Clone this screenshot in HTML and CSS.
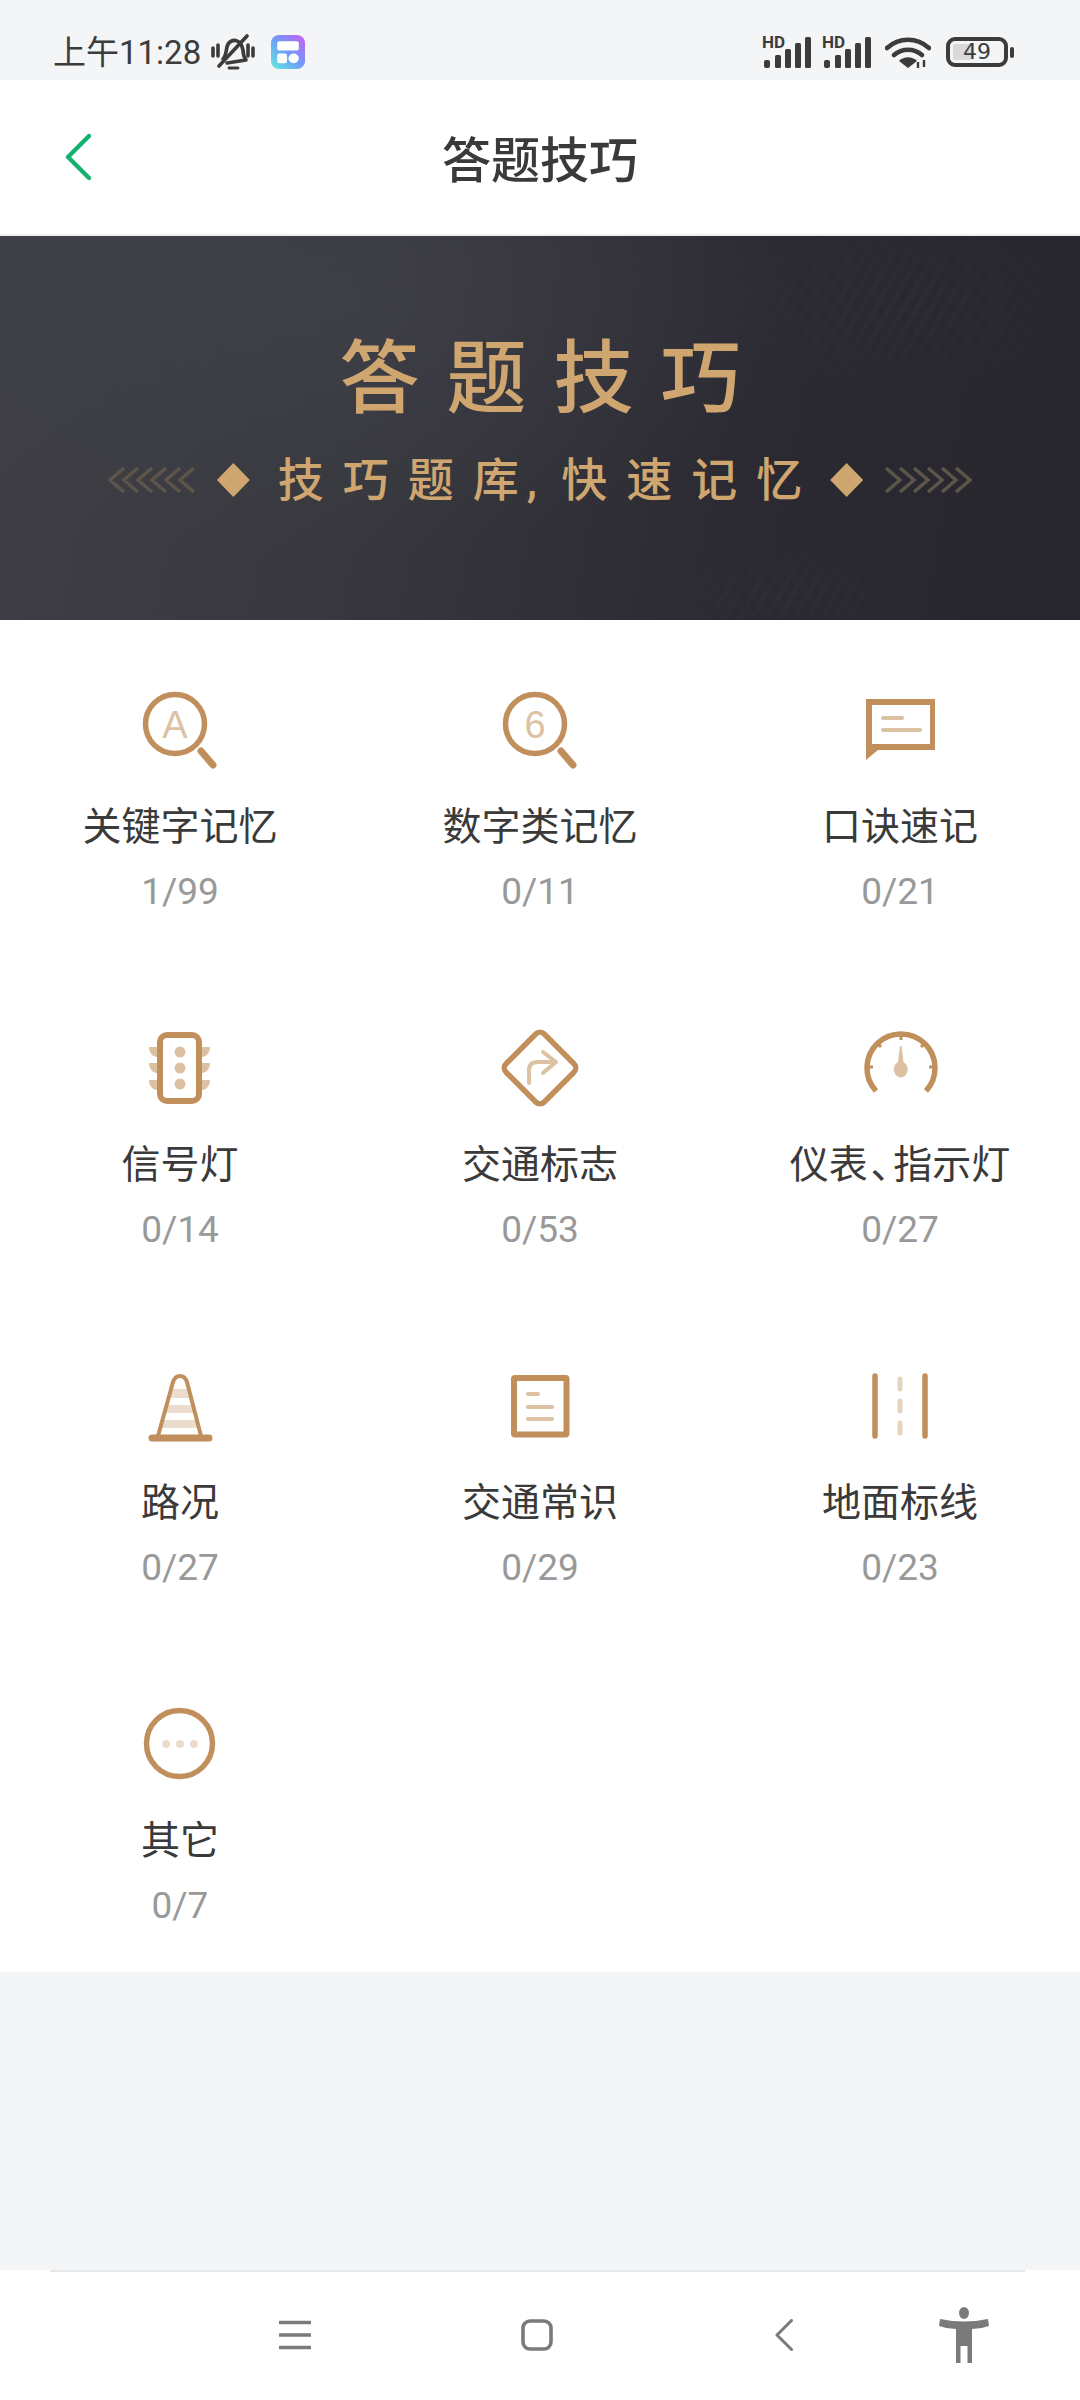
FILE: index.html
```html
<!DOCTYPE html>
<html lang="zh-CN">
<head>
  <meta charset="UTF-8">
  <title>答题技巧</title>
  <link rel="stylesheet" href="styles.css">
</head>
<body>
  <div class="status-bar">
    <div class="status-left">
      <span class="time">上午11:28</span>
      <svg class="bell" width="44" height="36" viewBox="0 0 44 36">
        <g fill="none" stroke="#3c3c3c" stroke-width="3.6" stroke-linecap="round" stroke-linejoin="round">
          <path d="M2 14v8M7 11v11M37 11v11M42 14v8"/>
          <path d="M12 25c3-3 3-8 4-12 1-5 6-8 10-6 4 1 5 5 6 9 0 4 1 7 3 10l-19 3"/>
          <path d="M8 32 36 2"/>
          <path d="M18 34h9" stroke-width="2.8"/>
        </g>
      </svg>
      <svg class="app-badge" width="34" height="34" viewBox="0 0 33 35" preserveAspectRatio="none">
        <defs>
          <linearGradient id="badge" x1="0" y1="1" x2="1" y2="0">
            <stop offset="0" stop-color="#62ecdf"/>
            <stop offset="0.5" stop-color="#6f9bf8"/>
            <stop offset="1" stop-color="#c95ff5"/>
          </linearGradient>
        </defs>
        <rect width="33" height="35" rx="8" fill="url(#badge)"/>
        <rect x="6" y="6.5" width="21" height="9.5" rx="2" fill="#fff"/>
        <rect x="6" y="19" width="9.5" height="10" rx="2" fill="#fff"/>
        <circle cx="22" cy="24" r="5" fill="#fff"/>
      </svg>
    </div>
    <div class="status-right">
      <svg class="signal" width="50" height="37" viewBox="0 -5 50 37">
        <text x="0" y="12" class="hd">HD</text>
        <g fill="#3c3c3c">
          <rect x="2" y="24" width="6" height="8" rx="2"/>
          <rect x="13" y="19" width="6" height="13" rx="1.5"/>
          <rect x="23" y="13" width="6" height="19" rx="1.5"/>
          <rect x="33" y="7" width="6" height="25" rx="1.5"/>
          <rect x="43" y="1" width="6" height="31" rx="1.5"/>
        </g>
      </svg>
      <svg class="signal" width="50" height="37" viewBox="0 -5 50 37">
        <text x="0" y="12" class="hd">HD</text>
        <g fill="#3c3c3c">
          <rect x="2" y="24" width="6" height="8" rx="2"/>
          <rect x="13" y="19" width="6" height="13" rx="1.5"/>
          <rect x="23" y="13" width="6" height="19" rx="1.5"/>
          <rect x="33" y="7" width="6" height="25" rx="1.5"/>
          <rect x="43" y="1" width="6" height="31" rx="1.5"/>
        </g>
      </svg>
      <svg class="wifi" width="46" height="33" viewBox="0 0 46 33">
        <g fill="none" stroke="#3c3c3c" stroke-width="4.6" stroke-linecap="round">
          <path d="M2 12c12-11 30-11 42 0"/>
          <path d="M9 19c8-7 20-7 28 0"/>
        </g>
        <path d="M14 25c5-5 13-5 18 0l-9 7z" fill="#3c3c3c"/>
        <path d="M33 26v6M39 24v7" stroke="#3c3c3c" stroke-width="2.4"/>
      </svg>
      <div class="battery">
        <div class="battery-body">
          <div class="battery-fill"></div>
          <span class="battery-num">49</span>
        </div>
        <div class="battery-knob"></div>
      </div>
    </div>
  </div>

  <div class="nav">
    <svg class="back" width="26" height="48" viewBox="0 0 26 48">
      <path d="M24 3 3 24l21 21" fill="none" stroke="#14b26e" stroke-width="4.4" stroke-linecap="round" stroke-linejoin="round"/>
    </svg>
    <div class="nav-title">答题技巧</div>
    <div></div>
  </div>

  <div class="banner">
    <div class="banner-title">答题技巧</div>
    <div class="banner-sub">
      <svg class="chevrons" width="88" height="26" viewBox="0 0 88 26">
        <path d="M17 1 3 13l14 12M31 1 17 13l14 12M45 1 31 13l14 12M59 1 45 13l14 12M73 1 59 13l14 12M87 1 73 13l14 12" fill="none" stroke="#5d5549" stroke-width="3.500"/>
      </svg>
      <span class="diamond"></span>
      <span class="banner-sub-text">技巧题<span class="tight">库</span><span class="comma">,</span>快速记忆</span>
      <span class="diamond"></span>
      <svg class="chevrons" width="88" height="26" viewBox="0 0 88 26">
        <path d="M1 1l14 12L1 25M15 1l14 12-14 12M29 1l14 12-14 12M43 1l14 12-14 12M57 1l14 12-14 12M71 1l14 12-14 12" fill="none" stroke="#5d5549" stroke-width="3.500"/>
      </svg>
    </div>
  </div>

  <div class="grid">
    <div class="item">
      <svg class="icon" viewBox="0 0 100 100">
        <circle class="dark" cx="45" cy="44" r="29.500"/>
        <path class="dark thick" d="M71 71 83 85"/>
        <text x="45" y="57.500" class="glyph">A</text>
      </svg>
      <div class="label">关键字记忆</div>
      <div class="count">1/99</div>
    </div>
    <div class="item">
      <svg class="icon" viewBox="0 0 100 100">
        <circle class="dark" cx="45" cy="44" r="29.500"/>
        <path class="dark thick" d="M71 71 83 85"/>
        <text x="45" y="57.500" class="glyph">6</text>
      </svg>
      <div class="label">数字类记忆</div>
      <div class="count">0/11</div>
    </div>
    <div class="item">
      <svg class="icon" viewBox="0 0 100 100">
        <path class="solid" fill-rule="evenodd" d="M16 19h69v51H28L16 80zM22 25v39h58V25z"/>
        <path class="light" d="M33 38h19M33 50h37"/>
      </svg>
      <div class="label">口诀速记</div>
      <div class="count">0/21</div>
    </div>

    <div class="item">
      <svg class="icon" viewBox="0 0 100 100">
        <path class="fill-light" d="M27 29h-8c0 6 4 10 8 10zM27 45h-8c0 6 4 10 8 10zM27 62h-8c0 6 4 10 8 10zM72 29h8c0 6-4 10-8 10zM72 45h8c0 6-4 10-8 10zM72 62h8c0 6-4 10-8 10z"/>
        <rect class="dark heavy" x="30" y="17" width="39" height="66" rx="7"/>
        <circle class="fill-light" cx="50" cy="34" r="5.500"/>
        <circle class="fill-light" cx="50" cy="50" r="5.500"/>
        <circle class="fill-light" cx="50" cy="66" r="5.500"/>
      </svg>
      <div class="label">信号灯</div>
      <div class="count">0/14</div>
    </div>
    <div class="item">
      <svg class="icon" viewBox="0 0 100 100">
        <rect class="dark" x="23" y="23" width="54" height="54" rx="6" transform="rotate(45 50 50)"/>
        <path class="light" d="M39 65V52q0-8 9-8h16M53 34l13 10-13 11"/>
      </svg>
      <div class="label">交通标志</div>
      <div class="count">0/53</div>
    </div>
    <div class="item">
      <svg class="icon" viewBox="0 0 100 100">
        <path class="dark" d="M26 73A34 34 0 1 1 76 73"/>
        <path class="dark tick" d="M51 16v6M17 49h6M79 49h6M27 25l4 4M75 25l-4 4"/>
        <path class="fill-light" d="M50 28h1.500l2 16a7 8 0 1 1-5.500 0z"/>
      </svg>
      <div class="label">仪表<span class="sep">、</span>指示灯</div>
      <div class="count">0/27</div>
    </div>

    <div class="item">
      <svg class="icon" viewBox="0 0 100 100">
        <path class="fill-pale" d="M41 33h18l2.700 9H38.300zM36.200 49h27.600l2.400 8H33.800zM31.800 64h36.400l2.400 8H29.400z"/>
        <path class="dark slim" d="M28 80 43 26q2-6 7-6t7 6l14 54"/>
        <path class="dark thick" d="M22 82h57"/>
      </svg>
      <div class="label">路况</div>
      <div class="count">0/27</div>
    </div>
    <div class="item">
      <svg class="icon" viewBox="0 0 100 100">
        <rect class="dark heavy" x="24" y="22" width="52.500" height="56.500" rx="1"/>
        <path class="light" d="M38 38h10M38 51h24M38 63h24"/>
      </svg>
      <div class="label">交通常识</div>
      <div class="count">0/29</div>
    </div>
    <div class="item">
      <svg class="icon" viewBox="0 0 100 100">
        <path class="dark round" d="M25 20v60M75 20v60"/>
        <path class="light pale-line" d="M50 23v10M50 45v10M50 67v10"/>
      </svg>
      <div class="label">地面标线</div>
      <div class="count">0/23</div>
    </div>

    <div class="item">
      <svg class="icon" viewBox="0 0 100 100">
        <circle class="dark" cx="49.500" cy="49.500" r="33"/>
        <circle class="fill-pale" cx="36" cy="50" r="4"/>
        <circle class="fill-pale" cx="50" cy="50" r="4"/>
        <circle class="fill-pale" cx="64" cy="50" r="4"/>
      </svg>
      <div class="label">其它</div>
      <div class="count">0/7</div>
    </div>
  </div>

  <div class="spacer"></div>

  <div class="bottom-bar">
    <svg class="sys-menu" width="32" height="30" viewBox="0 0 32 30">
      <path d="M1 2.500h30M1 15h30M1 27.500h30" stroke="#7a7a7a" stroke-width="3.600" stroke-linecap="round"/>
    </svg>
    <svg class="sys-home" width="32" height="32" viewBox="0 0 32 32">
      <rect x="2" y="2" width="28" height="28" rx="7" fill="none" stroke="#7a7a7a" stroke-width="3.600"/>
    </svg>
    <svg class="sys-back" width="18" height="32" viewBox="0 0 18 32">
      <path d="M16.500 1.500 2 16l14.500 14.500" fill="none" stroke="#7a7a7a" stroke-width="3" stroke-linecap="round" stroke-linejoin="round"/>
    </svg>
    <svg class="sys-person" width="50" height="56" viewBox="0 0 50 56">
      <ellipse cx="25" cy="6" rx="5" ry="6" fill="#7a7a7a"/>
      <path d="M1 12q24 5 48 0l1 7q-8 3-17 3V56h-4.500V39h-7v17H17V22Q8 22 0 19z" fill="#7a7a7a"/>
    </svg>
  </div>
</body>
</html>
```

FILE: styles.css
```css
* {
  box-sizing: border-box;
}
body {
  margin: 0;
  width: 1080px;
  height: 2400px;
  display: flex;
  flex-direction: column;
  background: #f4f5f7;
  font-family: Roboto, "Noto Sans CJK SC", sans-serif;
  color: #333;
}
svg {
  display: block;
  flex: none;
}

/* status bar */
.status-bar {
  height: 80px;
  padding: 24px 66px 0 53px;
  display: flex;
  justify-content: space-between;
  align-items: center;
}
.status-left {
  display: flex;
  align-items: center;
}
.time {
  font-size: 33px;
  line-height: 40px;
  color: #3c3c3c;
  margin-top: 2px;
}
.bell {
  margin-left: 10px;
}
.app-badge {
  margin-left: 16px;
}
.status-right {
  display: flex;
  align-items: center;
  gap: 10px;
}
.signal {
  margin-top: -5px;
}
.hd {
  font: bold 17px Roboto, sans-serif;
  fill: #3c3c3c;
}
.wifi {
  margin: 0 5px 0 3px;
}
.battery {
  display: flex;
  align-items: center;
  gap: 2px;
}
.battery-body {
  position: relative;
  width: 62px;
  height: 30px;
  border: 4px solid #3c3c3c;
  border-radius: 9px;
  display: flex;
  align-items: center;
  justify-content: center;
}
.battery-fill {
  position: absolute;
  left: 3px;
  top: 3px;
  bottom: 3px;
  width: 20px;
  background: #d8d9db;
  border-radius: 2px;
}
.battery-num {
  position: relative;
  font: 22px/22px "DejaVu Sans", sans-serif;
  color: #3c3c3c;
}
.battery-knob {
  width: 4px;
  height: 11px;
  background: #3c3c3c;
  border-radius: 2px;
}

/* title row */
.nav {
  height: 156px;
  background: #fff;
  border-bottom: 2px solid #eeeeee;
  display: grid;
  grid-template-columns: 1fr auto 1fr;
  align-items: center;
  padding-left: 65px;
}
.nav-title {
  font-size: 49px;
  font-weight: 500;
  color: #3a3a3a;
  margin: 0 0 2px -65px;
}

/* banner */
.banner {
  position: relative;
  height: 384px;
  background:
    radial-gradient(ellipse 480px 260px at 320px 60px, rgba(70,70,84,0.5), transparent),
    linear-gradient(100deg, #3f3f45 0%, #37373d 35%, #2b2a32 70%, #27262d 100%);
  display: flex;
  flex-direction: column;
  align-items: center;
}
.banner::before {
  content: "";
  position: absolute;
  inset: 0;
  background: repeating-linear-gradient(120deg, rgba(255,255,255,0.018) 0 5px, transparent 5px 12px);
  -webkit-mask-image:
    radial-gradient(ellipse 240px 110px at 900px 70px, #000, transparent),
    radial-gradient(ellipse 160px 60px at 790px 360px, #000, transparent);
  mask-image:
    radial-gradient(ellipse 240px 110px at 900px 70px, #000, transparent),
    radial-gradient(ellipse 160px 60px at 790px 360px, #000, transparent);
}
.banner-title {
  position: relative;
  margin-top: 95px;
  font-size: 80px;
  font-weight: 500;
  line-height: 96px;
  letter-spacing: 27px;
  margin-right: -27px;
  color: #cfa670;
}
.banner-sub {
  position: relative;
  margin-top: 25px;
  display: flex;
  align-items: center;
}
.banner-sub-text {
  font-size: 46px;
  font-weight: 500;
  line-height: 56px;
  letter-spacing: 19px;
  color: #cfa670;
  margin: 0 9px 0 28px;
}
.tight {
  letter-spacing: 8px;
}
.comma {
  letter-spacing: 24px;
}
.diamond {
  width: 33px;
  height: 34px;
  background: #cfa670;
  clip-path: polygon(50% 0, 100% 50%, 50% 100%, 0 50%);
  margin-left: 22px;
}
.banner-sub-text + .diamond {
  margin-left: 0;
  margin-right: 22px;
}

/* category grid */
.grid {
  background: #fff;
  display: grid;
  grid-template-columns: repeat(3, 360px);
  grid-auto-rows: 338px;
}
.item {
  padding-top: 60px;
  display: flex;
  flex-direction: column;
  align-items: center;
}
.icon {
  width: 100px;
  height: 100px;
}
.label {
  margin-top: 22px;
  font-size: 39px;
  line-height: 50px;
  color: #3a3a3a;
  font-feature-settings: "palt";
}
.sep {
  margin: 0 3px;
}
.count {
  margin-top: 18px;
  font-size: 37px;
  line-height: 44px;
  color: #999;
}
.dark {
  fill: none;
  stroke: #c08f5c;
  stroke-width: 5.5;
}
.dark.heavy {
  stroke-width: 6;
}
.dark.thick {
  stroke-width: 7;
  stroke-linecap: round;
}
.dark.slim {
  stroke-width: 4;
}
.dark.tick {
  stroke-width: 3;
}
.dark.round {
  stroke-linecap: round;
}
.solid {
  fill: #c08f5c;
}
.light {
  fill: none;
  stroke: #dcc1a3;
  stroke-width: 4;
  stroke-linecap: round;
  stroke-linejoin: round;
}
.pale-line {
  stroke: #e5d3c0;
  stroke-width: 5;
}
.fill-light {
  fill: #dcc1a3;
}
.fill-pale {
  fill: #ecdccd;
}
.glyph {
  font: 38px "Liberation Sans", sans-serif;
  fill: #dcc1a3;
  text-anchor: middle;
}

.spacer {
  flex: 1;
}

/* system navigation */
.bottom-bar {
  height: 130px;
  background: #fff;
  position: relative;
  display: flex;
  align-items: center;
  padding-left: 279px;
}
.bottom-bar::before {
  content: "";
  position: absolute;
  left: 50px;
  right: 55px;
  top: 0;
  border-top: 2px solid #e6e7e9;
}
.sys-home {
  margin-left: 210px;
}
.sys-back {
  margin-left: 222px;
}
.sys-person {
  margin-left: 146px;
}
```
